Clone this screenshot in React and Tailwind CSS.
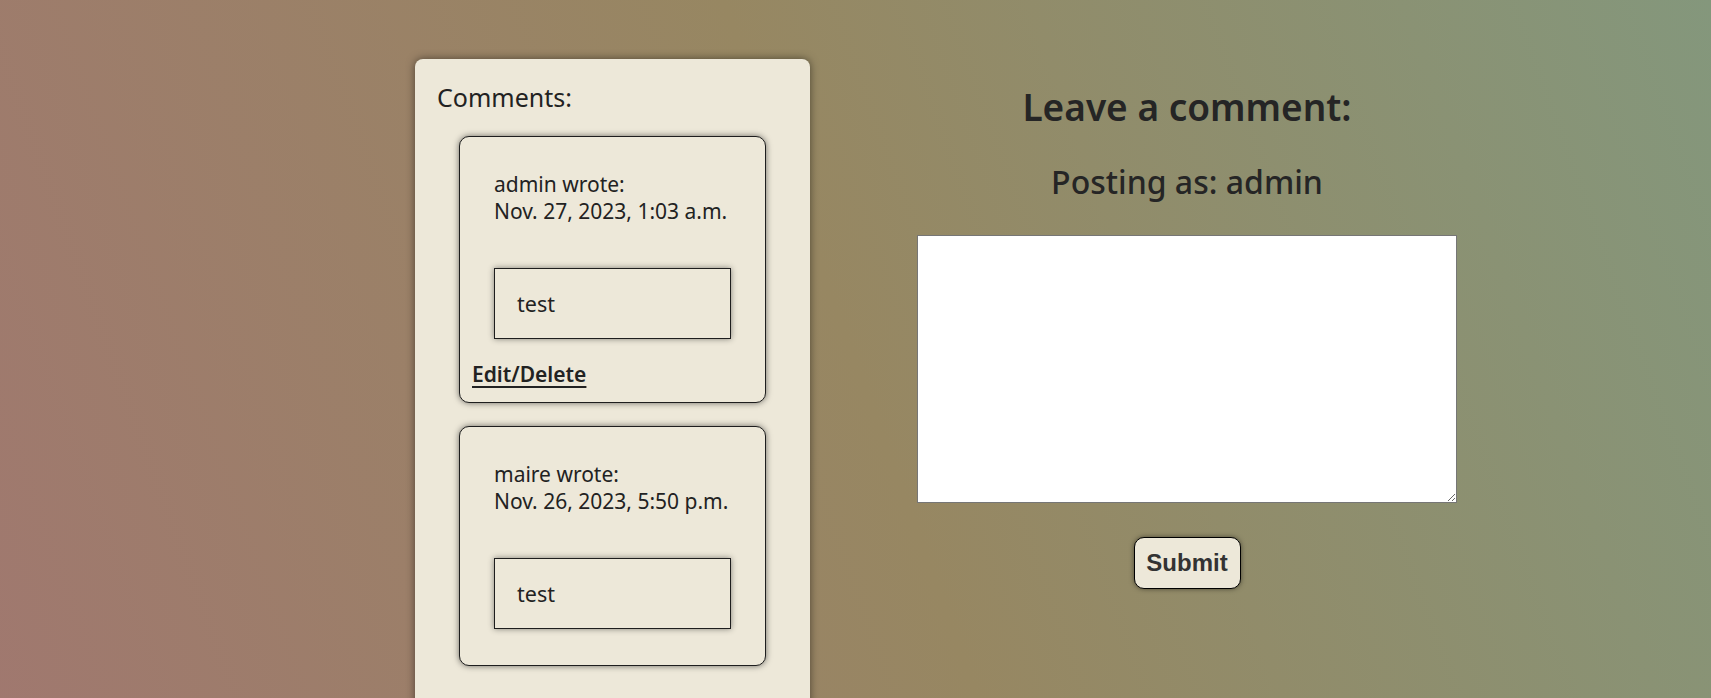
import React from "react";

function Comment({ author, date, body, editable }) {
  return (
    <div className="w-[307px] rounded-[10px] border border-[#1e1e1e] bg-[#ede8d9] shadow-[0_0_6px_rgba(0,0,0,0.55)]">
      <div className={editable ? "px-[34px] pt-[34px]" : "px-[34px] pt-[34px] pb-[36px]"}>
        <p className="text-[21px] leading-[27px]">{author} wrote:</p>
        <p className="text-[21px] leading-[27px]">{date}</p>
        <div className="mt-[43px] h-[71px] w-full border border-[#1e1e1e] bg-[#ede8d9] px-[22px] py-[21px] shadow-[0_0_6px_rgba(0,0,0,0.45)]">
          <p className="text-[21.5px] leading-[27px]">{body}</p>
        </div>
      </div>
      {editable && (
        <div className="pl-[12px] pt-[22px] pb-[14px]">
          <a href="#" className="text-[21px] leading-[27px] underline decoration-[2px] underline-offset-[4px] font-semibold">
            Edit/Delete
          </a>
        </div>
      )}
    </div>
  );
}

export default function App() {
  return (
    <div className="min-h-[698px] w-full overflow-hidden bg-[linear-gradient(70deg,#a0786f_0%,#978762_50%,#84977c_100%)] font-['Noto_Sans',sans-serif] text-[#222]">
      <div className="flex pl-[415px]">
        <div className="mt-[59px] flex w-[395px] flex-col rounded-[8px] bg-[#ede8d9] px-[22px] pt-[22px] pb-[60px] shadow-[0_0_8px_rgba(0,0,0,0.5)]">
          <h2 className="text-[25px] leading-[32px]">Comments:</h2>
          <div className="mt-[23px] flex flex-col items-center gap-[23px]">
            <Comment author="admin" date="Nov. 27, 2023, 1:03 a.m." body="test" editable />
            <Comment author="maire" date="Nov. 26, 2023, 5:50 p.m." body="test" />
          </div>
        </div>
        <div className="flex w-[754px] flex-col items-center pt-[85px]">
          <h1 className="text-[37px] leading-[44px] font-semibold text-[#252525]">Leave a comment:</h1>
          <h2 className="mt-[34px] text-[32px] leading-[38px] font-medium text-[#252525]">Posting as: admin</h2>
          <textarea className="mt-[34px] h-[268px] w-[540px] border border-[#767676] bg-white p-1 outline-none" />
          <button className="mt-[34px] h-[52px] w-[107px] rounded-[10px] border border-black bg-[#ede8d9] font-['Liberation_Sans',Arial,sans-serif] text-[24px] font-bold text-[#333] shadow-[0_0_5px_rgba(0,0,0,0.5)]">
            Submit
          </button>
        </div>
      </div>
    </div>
  );
}
